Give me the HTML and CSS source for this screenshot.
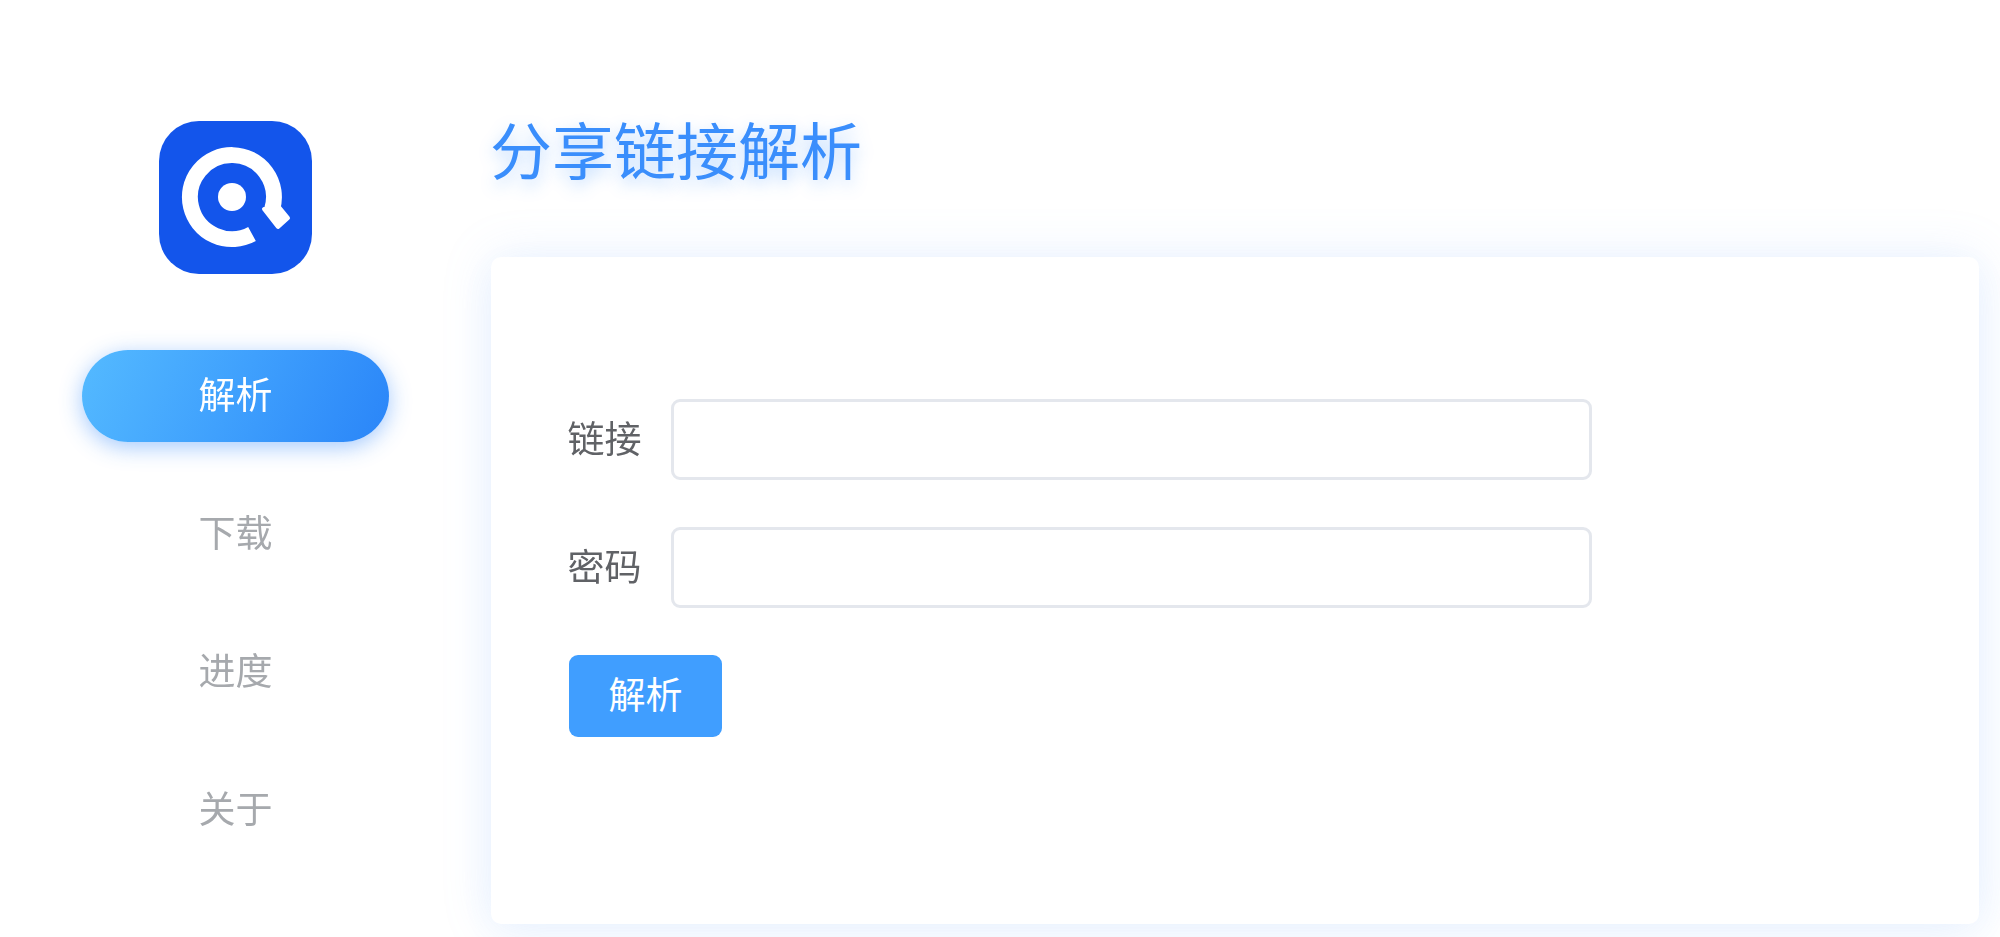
FILE: index.html
```html
<!DOCTYPE html>
<html lang="zh-CN">
<head>
<meta charset="utf-8">
<title>分享链接解析</title>
<link rel="stylesheet" href="styles.css">
</head>
<body>
<div class="app">
  <aside class="sidebar">
    <svg class="logo" viewBox="0 0 153 153" aria-hidden="true">
      <rect width="153" height="153" rx="40" fill="#1355eb"/>
      <path d="M93 113A42 42 0 1 1 113.2 88" fill="none" stroke="#fff" stroke-width="16"/>
      <polygon points="105,88 120,86 129,97 119,106" fill="#fff" stroke="#fff" stroke-width="4" stroke-linejoin="round"/>
      <circle cx="73" cy="76" r="14" fill="#fff"/>
    </svg>
    <nav class="nav">
      <a class="nav-item active">解析</a>
      <a class="nav-item">下载</a>
      <a class="nav-item">进度</a>
      <a class="nav-item">关于</a>
    </nav>
  </aside>
  <main class="main">
    <h1 class="title">分享链接解析</h1>
    <section class="card">
      <form class="form">
        <label class="row"><span class="label">链接</span><input class="input" type="text"></label>
        <label class="row"><span class="label">密码</span><input class="input" type="text"></label>
        <button class="btn" type="button">解析</button>
      </form>
    </section>
  </main>
</div>
</body>
</html>
```

FILE: styles.css
```css
* { box-sizing: border-box; }
html, body { margin: 0; height: 937px; overflow: hidden; background: #fff; }
body { font-family: "Noto Sans CJK SC", "Liberation Sans", sans-serif; }
.app { display: flex; height: 937px; filter: blur(.45px); }
.sidebar { width: 491px; flex: none; padding: 121px 0 0 82px; }
.logo { display: block; width: 153px; height: 153px; margin-left: 77px; }
.nav { display: flex; flex-direction: column; gap: 46px; width: 307px; margin-top: 76px; }
.nav-item { display: flex; align-items: center; justify-content: center; height: 92px; padding-bottom: 7px; border-radius: 46px; font-size: 37px; color: #a6a9ad; }
.nav-item.active { color: #fff; background: linear-gradient(115deg, #54baff 0%, #3fa0fd 50%, #2a85f8 100%); box-shadow: 0 5px 22px rgba(52, 136, 250, .45); }
.main { flex: 1; padding-right: 21px; min-width: 0; }
.title { margin: 108px 0 69px -1px; height: 80px; line-height: 80px; font-size: 62px; font-weight: 400; color: #3a8efc; text-shadow: 0 6px 16px rgba(58, 142, 252, .35); white-space: nowrap; }
.card { height: 667px; background: #fff; border-radius: 10px; box-shadow: 0 0 50px rgba(130, 175, 250, .17), 0 10px 40px rgba(130, 175, 250, .08); padding: 142px 0 0 78px; }
.form { display: flex; flex-direction: column; align-items: flex-start; gap: 47px; }
.row { display: flex; align-items: center; }
.label { width: 102px; margin-left: -1.5px; padding-bottom: 6px; font-size: 37px; color: #606266; flex: none; }
.input { display: block; width: 921px; height: 81px; margin-left: 1.5px; border: 3px solid #e4e7ed; border-radius: 9px; background: #fff; outline: none; }
.btn { width: 153px; height: 82px; border: 0; border-radius: 9px; background: #409eff; color: #fff; font: inherit; font-size: 37px; padding: 0 0 6px; }
```
